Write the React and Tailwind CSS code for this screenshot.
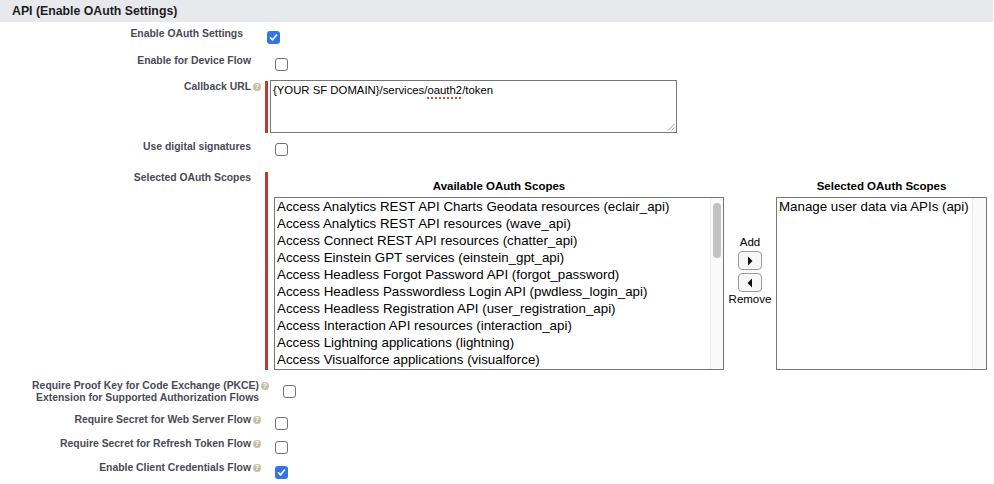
import React from "react";

const available = [
  "Access Analytics REST API Charts Geodata resources (eclair_api)",
  "Access Analytics REST API resources (wave_api)",
  "Access Connect REST API resources (chatter_api)",
  "Access Einstein GPT services (einstein_gpt_api)",
  "Access Headless Forgot Password API (forgot_password)",
  "Access Headless Passwordless Login API (pwdless_login_api)",
  "Access Headless Registration API (user_registration_api)",
  "Access Interaction API resources (interaction_api)",
  "Access Lightning applications (lightning)",
  "Access Visualforce applications (visualforce)",
];

function Box({ checked, className = "" }) {
  if (checked) {
    return (
      <div className={`w-[13px] h-[13px] shrink-0 rounded-[3px] bg-[#3574e6] flex items-center justify-center ${className}`}>
        <svg width="9" height="9" viewBox="0 0 10 10">
          <path d="M1.6 5.3 L4 7.6 L8.4 2.3" stroke="white" strokeWidth="1.8" fill="none" strokeLinecap="round" strokeLinejoin="round" />
        </svg>
      </div>
    );
  }
  return <div className={`w-[13px] h-[13px] shrink-0 rounded-[3px] border border-[#727272] bg-white ${className}`} />;
}

function Help() {
  return (
    <span className="inline-block align-[1px] ml-[2px] mr-[-10px] w-[8px] h-[8px] rounded-full bg-[#c7bf9f] text-white text-[6.5px] leading-[8px] text-center font-bold">
      ?
    </span>
  );
}

function Label({ children, help, w }) {
  return (
    <div className={`${w} shrink-0 text-right font-bold text-[10.4px] leading-[13px] text-[#4a4a56]`}>
      {children}
      {help && <Help />}
    </div>
  );
}

function RedBar({ h }) {
  return <div className={`w-[3px] ${h} mt-[1px] bg-[#c23934] shrink-0`} />;
}

export default function App() {
  return (
    <div className="w-[994px] h-[484px] bg-white overflow-hidden" style={{ fontFamily: '"Liberation Sans", Arial, sans-serif' }}>
      <div className="w-[993px] h-[22px] bg-[#e8e9ed] pl-[12px] flex items-center">
        <span className="font-bold text-[12.3px] text-[#1d1d1d]">API (Enable OAuth Settings)</span>
      </div>

      {/* Enable OAuth Settings */}
      <div className="flex items-start mt-[5px]">
        <Label w="w-[243px]">Enable OAuth Settings</Label>
        <Box checked className="ml-[24px] mt-[4px]" />
      </div>

      {/* Device flow */}
      <div className="flex items-start mt-[10px]">
        <Label w="w-[251px]">Enable for Device Flow</Label>
        <Box className="ml-[24px] mt-[4px]" />
      </div>

      {/* Callback URL */}
      <div className="flex items-start mt-[9px]">
        <Label w="w-[251px]" help>
          Callback URL
        </Label>
        <div className="flex items-start ml-[14px]">
          <RedBar h="h-[52px]" />
          <div className="relative ml-[2px] w-[407px] h-[53px] border border-[#767676] bg-white px-[2px] pt-[1px] text-[11.35px] leading-[16px] text-black">
            {"{YOUR SF DOMAIN}/services/"}
            <span className="underline decoration-dotted decoration-[#e0463b] decoration-2 underline-offset-[3px]">oauth2</span>
            /token
            <svg className="absolute right-[1px] bottom-[1px]" width="8" height="8" viewBox="0 0 8 8">
              <path d="M7.5 1 L1 7.5 M7.5 4.5 L4.5 7.5" stroke="#8a8a8a" strokeWidth="0.9" />
            </svg>
          </div>
        </div>
      </div>

      {/* Digital signatures */}
      <div className="flex items-start mt-[7px]">
        <Label w="w-[251px]">Use digital signatures</Label>
        <Box className="ml-[24px] mt-[3px]" />
      </div>

      {/* Selected OAuth Scopes */}
      <div className="flex items-start mt-[15px]">
        <Label w="w-[251px]">Selected OAuth Scopes</Label>
        <div className="flex items-start ml-[14px]">
          <RedBar h="h-[198px]" />
          <div className="flex items-start ml-[6px]">
            <div className="flex flex-col w-[450px]">
              <div className="mt-[9px] text-center font-bold text-[11.5px] leading-[13px] text-black">Available OAuth Scopes</div>
              <div className="mt-[4px] h-[173px] border border-[#767676] flex bg-white">
                <div className="flex-1 pl-[2px] text-[13.33px] leading-[17px] text-black whitespace-nowrap overflow-hidden">
                  {available.map((a) => (
                    <div key={a}>{a}</div>
                  ))}
                </div>
                <div className="w-[13px] bg-[#fafafa] border-l border-[#ececec] flex justify-center pt-[5px]">
                  <div className="w-[8px] h-[55px] rounded-full bg-[#c2c2c2]" />
                </div>
              </div>
            </div>

            <div className="w-[52px] flex flex-col items-center mt-[65px] text-[11.5px] leading-[13px] text-black">
              <div>Add</div>
              <div className="mt-[2px] w-[24px] h-[19px] rounded-[4px] border border-[#9a9a9a] bg-[#f7f7f7] flex items-center justify-center">
                <svg width="6" height="10" viewBox="0 0 6 10">
                  <path d="M1 0.5 L5.5 5 L1 9.5 Z" fill="#111" />
                </svg>
              </div>
              <div className="mt-[3px] w-[24px] h-[19px] rounded-[4px] border border-[#9a9a9a] bg-[#f7f7f7] flex items-center justify-center">
                <svg width="6" height="10" viewBox="0 0 6 10">
                  <path d="M5 0.5 L0.5 5 L5 9.5 Z" fill="#111" />
                </svg>
              </div>
              <div className="mt-[1px]">Remove</div>
            </div>

            <div className="flex flex-col w-[211px]">
              <div className="mt-[9px] text-center font-bold text-[11.5px] leading-[13px] text-black">Selected OAuth Scopes</div>
              <div className="mt-[4px] h-[173px] border border-[#767676] flex bg-white">
                <div className="flex-1 pl-[2px] text-[13.33px] leading-[17px] text-black whitespace-nowrap overflow-hidden">
                  <div>Manage user data via APIs (api)</div>
                </div>
                <div className="w-[14px] bg-[#fafafa] border-l border-[#ececec]" />
              </div>
            </div>
          </div>
        </div>
      </div>

      {/* PKCE */}
      <div className="flex items-start mt-[10px]">
        <div className="w-[259px] shrink-0 text-right font-bold text-[10.4px] leading-[12px] text-[#4a4a56]">
          Require Proof Key for Code Exchange (PKCE)
          <Help />
          <br />
          Extension for Supported Authorization Flows
        </div>
        <Box className="ml-[24px] mt-[5px]" />
      </div>

      {/* Web server */}
      <div className="flex items-start mt-[9px]">
        <Label w="w-[251px]" help>
          Require Secret for Web Server Flow
        </Label>
        <Box className="ml-[24px] mt-[4px]" />
      </div>

      {/* Refresh token */}
      <div className="flex items-start mt-[7px]">
        <Label w="w-[251px]" help>
          Require Secret for Refresh Token Flow
        </Label>
        <Box className="ml-[24px] mt-[4px]" />
      </div>

      {/* Client credentials */}
      <div className="flex items-start mt-[7px]">
        <Label w="w-[251px]" help>
          Enable Client Credentials Flow
        </Label>
        <Box checked className="ml-[24px] mt-[5px]" />
      </div>
    </div>
  );
}
